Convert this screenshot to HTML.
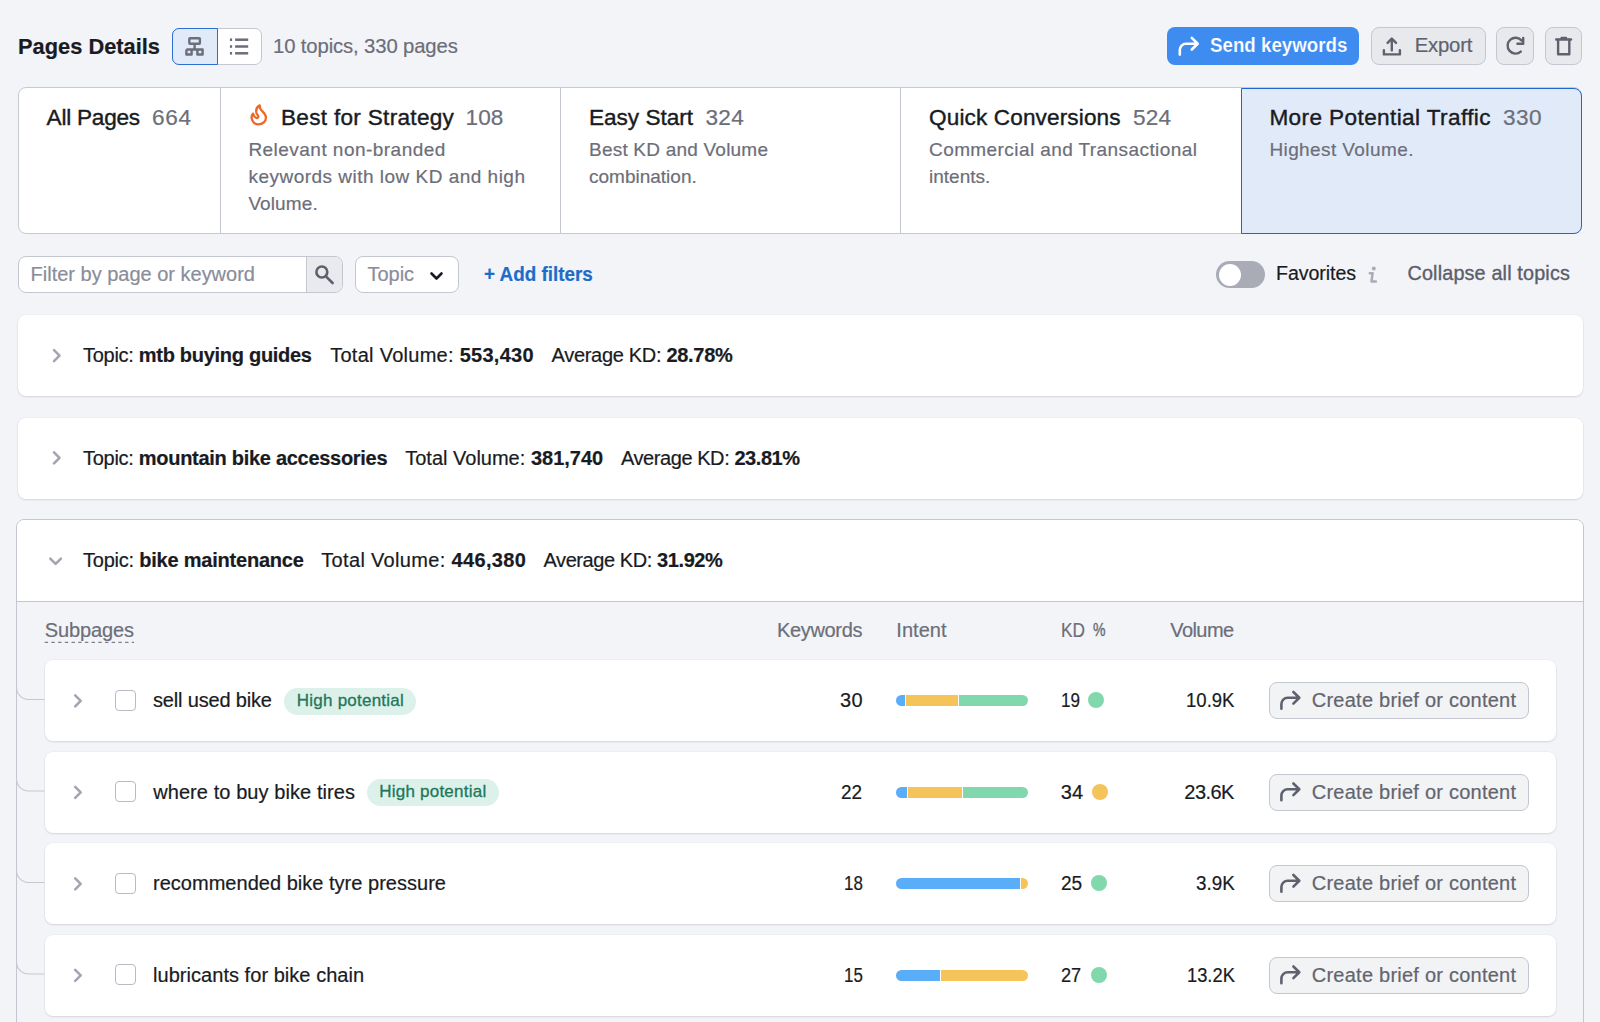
<!DOCTYPE html>
<html><head><meta charset="utf-8">
<style>
*{box-sizing:border-box;margin:0;padding:0}
html,body{width:1600px;height:1022px;overflow:hidden;background:#f3f4f8;font-family:"Liberation Sans",sans-serif;color:#191b23}
.a{position:absolute}
.t{position:absolute;white-space:nowrap;line-height:1;-webkit-text-stroke:0.2px currentColor}
.btn{position:absolute;border:1px solid #c4c7cf;border-radius:8px;background:rgba(130,133,145,0.1)}
.card{position:absolute;background:#fff;border-radius:8px}
svg{position:absolute;overflow:visible}
b{font-weight:bold}
</style></head><body>
<div class="a" style="left:172px;top:28px;width:90px;height:37px;border:1px solid #c4c7cf;border-radius:7px;background:#fff"></div>
<div class="a" style="left:172px;top:28px;width:46px;height:37px;border:1.5px solid #2b6fd2;border-radius:7px 0 0 7px;background:#e1eaf9"></div>
<div class="a" style="left:1166.8px;top:27.3px;width:192.5px;height:37.8px;border-radius:8px;background:#3e8cf0"></div>
<div class="btn" style="left:1370.5px;top:27.3px;width:115px;height:37.8px"></div>
<div class="btn" style="left:1496px;top:27.3px;width:38px;height:37.8px"></div>
<div class="btn" style="left:1545px;top:27.3px;width:37px;height:37.8px"></div>
<div class="t" style="left:18.10px;top:34.70px;font-size:22.8px;letter-spacing:0.000px;color:#191b23;transform:scaleX(0.9575);transform-origin:0 0;"><b>Pages Details</b></div>
<div class="t" style="left:273.00px;top:35.82px;font-size:20.3px;letter-spacing:-0.125px;color:#6c6e79;">10 topics, 330 pages</div>
<div class="t" style="left:1210.00px;top:36.39px;font-size:19.5px;letter-spacing:0.000px;color:#fff;transform:scaleX(0.9600);transform-origin:0 0;-webkit-text-stroke:0.2px #3e8cf0;"><b>Send keywords</b></div>
<div class="t" style="left:1414.70px;top:35.02px;font-size:20.3px;letter-spacing:-0.193px;color:#5f626e;">Export</div>
<div class="a" style="left:18px;top:87.2px;width:1564px;height:146.5px;border:1px solid #c6c9d0;border-radius:8px;background:#fff"></div>
<div class="a" style="left:220px;top:88px;width:1px;height:145px;background:#c4c7cf"></div>
<div class="a" style="left:560px;top:88px;width:1px;height:145px;background:#c4c7cf"></div>
<div class="a" style="left:900px;top:88px;width:1px;height:145px;background:#c4c7cf"></div>
<div class="a" style="left:1241px;top:87.5px;width:341px;height:146px;border:1.5px solid #1f66d1;border-radius:0 8px 8px 0;background:#e1eaf9"></div>
<div class="t" style="left:46.60px;top:106.87px;font-size:22.6px;letter-spacing:-0.246px;color:#191b23;-webkit-text-stroke:0.4px #191b23;">All Pages</div>
<div class="t" style="left:152.00px;top:106.87px;font-size:22.6px;letter-spacing:0.629px;color:#6c6e79;">664</div>
<div class="t" style="left:281.00px;top:106.87px;font-size:22.6px;letter-spacing:0.289px;color:#191b23;-webkit-text-stroke:0.4px #191b23;">Best for Strategy</div>
<div class="t" style="left:465.60px;top:106.87px;font-size:22.6px;letter-spacing:0.000px;color:#6c6e79;">108</div>
<div class="t" style="left:589.00px;top:106.87px;font-size:22.6px;letter-spacing:-0.021px;color:#191b23;-webkit-text-stroke:0.4px #191b23;">Easy Start</div>
<div class="t" style="left:705.60px;top:106.87px;font-size:22.6px;letter-spacing:0.204px;color:#6c6e79;">324</div>
<div class="t" style="left:929.00px;top:106.87px;font-size:22.6px;letter-spacing:0.124px;color:#191b23;-webkit-text-stroke:0.4px #191b23;">Quick Conversions</div>
<div class="t" style="left:1133.00px;top:106.87px;font-size:22.6px;letter-spacing:0.129px;color:#6c6e79;">524</div>
<div class="t" style="left:1269.40px;top:106.87px;font-size:22.6px;letter-spacing:0.385px;color:#191b23;-webkit-text-stroke:0.4px #191b23;">More Potential Traffic</div>
<div class="t" style="left:1503.00px;top:106.87px;font-size:22.6px;letter-spacing:0.429px;color:#6c6e79;">330</div>
<div class="t" style="left:248.40px;top:139.92px;font-size:19px;letter-spacing:0.468px;color:#6c6e79;">Relevant non-branded</div>
<div class="t" style="left:248.40px;top:166.92px;font-size:19px;letter-spacing:0.487px;color:#6c6e79;">keywords with low KD and high</div>
<div class="t" style="left:248.40px;top:193.92px;font-size:19px;letter-spacing:0.102px;color:#6c6e79;">Volume.</div>
<div class="t" style="left:589.00px;top:139.92px;font-size:19px;letter-spacing:0.214px;color:#6c6e79;">Best KD and Volume</div>
<div class="t" style="left:589.00px;top:166.92px;font-size:19px;letter-spacing:0.000px;color:#6c6e79;">combination.</div>
<div class="t" style="left:929.00px;top:139.92px;font-size:19px;letter-spacing:0.419px;color:#6c6e79;">Commercial and Transactional</div>
<div class="t" style="left:929.00px;top:166.92px;font-size:19px;letter-spacing:0.000px;color:#6c6e79;">intents.</div>
<div class="t" style="left:1269.40px;top:139.52px;font-size:19px;letter-spacing:0.406px;color:#6c6e79;">Highest Volume.</div>
<div class="a" style="left:18px;top:256px;width:325px;height:37px;border:1px solid #c4c7cf;border-radius:8px;background:#fff;overflow:hidden">
  <div class="a" style="left:287.4px;top:0;width:38px;height:37px;background:#e9eaee;border-left:1px solid #c4c7cf"></div></div>
<div class="a" style="left:354.5px;top:256px;width:104px;height:37px;border:1px solid #c4c7cf;border-radius:8px;background:#fff"></div>
<div class="a" style="left:1216px;top:261px;width:49px;height:27px;border-radius:14px;background:#a9abb6"></div>
<div class="a" style="left:1218.5px;top:263.5px;width:22px;height:22px;border-radius:11px;background:#fff"></div>
<div class="t" style="left:30.60px;top:264.47px;font-size:20px;letter-spacing:-0.008px;color:#898d9a;">Filter by page or keyword</div>
<div class="t" style="left:367.60px;top:264.47px;font-size:20px;letter-spacing:-0.050px;color:#898d9a;">Topic</div>
<div class="t" style="left:483.60px;top:264.89px;font-size:19.5px;letter-spacing:0.000px;color:#1d6cc8;transform:scaleX(0.9670);transform-origin:0 0;"><b>+ Add filters</b></div>
<div class="t" style="left:1276.00px;top:263.81px;font-size:19.6px;letter-spacing:-0.070px;color:#191b23;">Favorites</div>
<div class="t" style="left:1407.50px;top:263.84px;font-size:19.8px;letter-spacing:0.162px;color:#5b5e6a;-webkit-text-stroke:0.35px #5b5e6a;">Collapse all topics</div>
<div class="card" style="left:17.5px;top:315px;width:1565px;height:81px;box-shadow:0 1px 2px rgba(25,27,35,.12),0 0 0 0.5px rgba(25,27,35,.04)"></div>
<div class="card" style="left:17.5px;top:417.5px;width:1565px;height:81px;box-shadow:0 1px 2px rgba(25,27,35,.12),0 0 0 0.5px rgba(25,27,35,.04)"></div>
<div class="t" style="left:83.00px;top:345.47px;font-size:20px;letter-spacing:-0.287px;color:#191b23;">Topic: <b>mtb buying guides</b></div>
<div class="t" style="left:330.20px;top:345.47px;font-size:20px;letter-spacing:0.274px;color:#191b23;">Total Volume: <b>553,430</b></div>
<div class="t" style="left:551.60px;top:345.47px;font-size:20px;letter-spacing:-0.310px;color:#191b23;">Average KD: <b>28.78%</b></div>
<div class="t" style="left:83.00px;top:447.57px;font-size:20px;letter-spacing:-0.287px;color:#191b23;">Topic: <b>mountain bike accessories</b></div>
<div class="t" style="left:405.20px;top:447.57px;font-size:20px;letter-spacing:0.004px;color:#191b23;">Total Volume: <b>381,740</b></div>
<div class="t" style="left:621.00px;top:447.57px;font-size:20px;letter-spacing:-0.434px;color:#191b23;">Average KD: <b>23.81%</b></div>
<div class="a" style="left:16px;top:519px;width:1567.5px;height:520px;border:1px solid #c4c7cf;border-radius:8px;background:#f3f4f8;overflow:hidden">
  <div class="a" style="left:0;top:0;width:1566px;height:82px;background:#fff;border-bottom:1px solid #c4c7cf"></div></div>
<svg style="left:0;top:0" width="200" height="700"><path d="M44.7 642.3H134" stroke="#7d808b" stroke-width="1.3" stroke-dasharray="3.4 3.3"/></svg>
<div class="t" style="left:83.00px;top:550.07px;font-size:20px;letter-spacing:-0.220px;color:#191b23;">Topic: <b>bike maintenance</b></div>
<div class="t" style="left:321.25px;top:550.07px;font-size:20px;letter-spacing:0.332px;color:#191b23;">Total Volume: <b>446,380</b></div>
<div class="t" style="left:543.50px;top:550.07px;font-size:20px;letter-spacing:-0.416px;color:#191b23;">Average KD: <b>31.92%</b></div>
<div class="t" style="left:44.70px;top:620.27px;font-size:20px;letter-spacing:-0.100px;color:#6c6e79;">Subpages</div>
<div class="t" style="left:776.90px;top:620.07px;font-size:20px;letter-spacing:-0.314px;color:#6c6e79;">Keywords</div>
<div class="t" style="left:896.30px;top:620.07px;font-size:20px;letter-spacing:0.040px;color:#6c6e79;">Intent</div>
<div class="t" style="left:1061.00px;top:620.07px;font-size:20px;letter-spacing:0.000px;color:#6c6e79;transform:scaleX(0.8633);transform-origin:0 0;">KD</div>
<div class="t" style="left:1092.50px;top:621.34px;font-size:18.5px;letter-spacing:0.000px;color:#6c6e79;transform:scaleX(0.7592);transform-origin:0 0;-webkit-text-stroke:0.45px #6c6e79;">%</div>
<div class="t" style="left:1170.20px;top:620.07px;font-size:20px;letter-spacing:-0.540px;color:#6c6e79;">Volume</div>
<div class="card" style="left:44.5px;top:660px;width:1511px;height:81px;box-shadow:0 1px 2px rgba(25,27,35,.12),0 0 0 0.5px rgba(25,27,35,.04)"></div>
<div class="a" style="left:114.5px;top:689.5px;width:21px;height:21px;border:1px solid #b8bbc4;border-radius:4px;background:#fff"></div>
<div class="a" style="left:284.3px;top:687.5px;width:132px;height:27px;border-radius:14px;background:#dcf1ea"></div>
<div class="a" style="left:1088.2px;top:692.2px;width:16.2px;height:16.2px;border-radius:50%;background:#80d8ac"></div>
<div class="btn" style="left:1268.5px;top:682.0px;width:260px;height:37px"></div>
<div class="a" style="left:895.75px;top:695.0px;width:132px;height:11px;border-radius:5.5px;overflow:hidden;display:flex;background:#fff"><div style="width:9px;height:11px;background:#5aadf8;flex:none;margin-left:0px"></div><div style="width:52.5px;height:11px;background:#f4c35a;flex:none;margin-left:1px"></div><div style="width:69.5px;height:11px;background:#80d8ac;flex:none;margin-left:1px"></div></div>
<div class="t" style="left:153.00px;top:690.47px;font-size:20px;letter-spacing:-0.169px;color:#191b23;">sell used bike</div>
<div class="t" style="left:296.80px;top:691.61px;font-size:17px;letter-spacing:0.233px;color:#21775a;-webkit-text-stroke:0.3px #21775a;">High potential</div>
<div class="t" style="left:840.00px;top:690.47px;font-size:20px;letter-spacing:0.300px;color:#191b23;">30</div>
<div class="t" style="left:1060.80px;top:690.47px;font-size:20px;letter-spacing:0.000px;color:#191b23;transform:scaleX(0.8559);transform-origin:0 0;">19</div>
<div class="t" style="left:1186.00px;top:690.47px;font-size:20px;letter-spacing:0.000px;color:#191b23;transform:scaleX(0.9272);transform-origin:0 0;">10.9K</div>
<div class="t" style="left:1311.80px;top:690.47px;font-size:20px;letter-spacing:0.236px;color:#62656f;">Create brief or content</div>
<div class="card" style="left:44.5px;top:751.5px;width:1511px;height:81px;box-shadow:0 1px 2px rgba(25,27,35,.12),0 0 0 0.5px rgba(25,27,35,.04)"></div>
<div class="a" style="left:114.5px;top:781.0px;width:21px;height:21px;border:1px solid #b8bbc4;border-radius:4px;background:#fff"></div>
<div class="a" style="left:366.7px;top:779.0px;width:132px;height:27px;border-radius:14px;background:#dcf1ea"></div>
<div class="a" style="left:1092.3px;top:783.7px;width:16.2px;height:16.2px;border-radius:50%;background:#f4c35a"></div>
<div class="btn" style="left:1268.5px;top:773.5px;width:260px;height:37px"></div>
<div class="a" style="left:895.75px;top:786.5px;width:132px;height:11px;border-radius:5.5px;overflow:hidden;display:flex;background:#fff"><div style="width:11px;height:11px;background:#5aadf8;flex:none;margin-left:0px"></div><div style="width:54px;height:11px;background:#f4c35a;flex:none;margin-left:1px"></div><div style="width:65px;height:11px;background:#80d8ac;flex:none;margin-left:1px"></div></div>
<div class="t" style="left:153.20px;top:781.97px;font-size:20px;letter-spacing:0.077px;color:#191b23;">where to buy bike tires</div>
<div class="t" style="left:379.20px;top:783.11px;font-size:17px;letter-spacing:0.233px;color:#21775a;-webkit-text-stroke:0.3px #21775a;">High potential</div>
<div class="t" style="left:841.40px;top:781.97px;font-size:20px;letter-spacing:0.000px;color:#191b23;transform:scaleX(0.9459);transform-origin:0 0;">22</div>
<div class="t" style="left:1060.80px;top:781.97px;font-size:20px;letter-spacing:0.000px;color:#191b23;">34</div>
<div class="t" style="left:1184.30px;top:781.97px;font-size:20px;letter-spacing:-0.525px;color:#191b23;">23.6K</div>
<div class="t" style="left:1311.80px;top:781.97px;font-size:20px;letter-spacing:0.236px;color:#62656f;">Create brief or content</div>
<div class="card" style="left:44.5px;top:843px;width:1511px;height:81px;box-shadow:0 1px 2px rgba(25,27,35,.12),0 0 0 0.5px rgba(25,27,35,.04)"></div>
<div class="a" style="left:114.5px;top:872.5px;width:21px;height:21px;border:1px solid #b8bbc4;border-radius:4px;background:#fff"></div>
<div class="a" style="left:1091px;top:875.2px;width:16.2px;height:16.2px;border-radius:50%;background:#80d8ac"></div>
<div class="btn" style="left:1268.5px;top:865.0px;width:260px;height:37px"></div>
<div class="a" style="left:895.75px;top:878.0px;width:132px;height:11px;border-radius:5.5px;overflow:hidden;display:flex;background:#fff"><div style="width:124.5px;height:11px;background:#5aadf8;flex:none;margin-left:0px"></div><div style="width:6.5px;height:11px;background:#f4c35a;flex:none;margin-left:1px"></div></div>
<div class="t" style="left:153.00px;top:873.47px;font-size:20px;letter-spacing:0.021px;color:#191b23;">recommended bike tyre pressure</div>
<div class="t" style="left:843.60px;top:873.47px;font-size:20px;letter-spacing:0.000px;color:#191b23;transform:scaleX(0.8468);transform-origin:0 0;">18</div>
<div class="t" style="left:1060.80px;top:873.47px;font-size:20px;letter-spacing:0.000px;color:#191b23;transform:scaleX(0.9550);transform-origin:0 0;">25</div>
<div class="t" style="left:1195.60px;top:873.47px;font-size:20px;letter-spacing:0.000px;color:#191b23;transform:scaleX(0.9417);transform-origin:0 0;">3.9K</div>
<div class="t" style="left:1311.80px;top:873.47px;font-size:20px;letter-spacing:0.236px;color:#62656f;">Create brief or content</div>
<div class="card" style="left:44.5px;top:934.5px;width:1511px;height:81px;box-shadow:0 1px 2px rgba(25,27,35,.12),0 0 0 0.5px rgba(25,27,35,.04)"></div>
<div class="a" style="left:114.5px;top:964.0px;width:21px;height:21px;border:1px solid #b8bbc4;border-radius:4px;background:#fff"></div>
<div class="a" style="left:1090.5px;top:966.7px;width:16.2px;height:16.2px;border-radius:50%;background:#80d8ac"></div>
<div class="btn" style="left:1268.5px;top:956.5px;width:260px;height:37px"></div>
<div class="a" style="left:895.75px;top:969.5px;width:132px;height:11px;border-radius:5.5px;overflow:hidden;display:flex;background:#fff"><div style="width:44px;height:11px;background:#5aadf8;flex:none;margin-left:0px"></div><div style="width:87px;height:11px;background:#f4c35a;flex:none;margin-left:1px"></div></div>
<div class="t" style="left:153.00px;top:964.97px;font-size:20px;letter-spacing:0.042px;color:#191b23;">lubricants for bike chain</div>
<div class="t" style="left:843.60px;top:964.97px;font-size:20px;letter-spacing:0.000px;color:#191b23;transform:scaleX(0.8468);transform-origin:0 0;">15</div>
<div class="t" style="left:1060.80px;top:964.97px;font-size:20px;letter-spacing:0.000px;color:#191b23;transform:scaleX(0.9099);transform-origin:0 0;">27</div>
<div class="t" style="left:1186.60px;top:964.97px;font-size:20px;letter-spacing:0.000px;color:#191b23;transform:scaleX(0.9157);transform-origin:0 0;">13.2K</div>
<div class="t" style="left:1311.80px;top:964.97px;font-size:20px;letter-spacing:0.236px;color:#62656f;">Create brief or content</div>
<svg style="left:0;top:0" width="1600" height="1022" viewBox="0 0 1600 1022"><g fill="none" stroke="#6c6e79" stroke-width="2.4" stroke-linejoin="round"><rect x="189.3" y="38.2" width="10.6" height="5.6" rx="0.8"/><path d="M194.6 43.8V49.4"/><path d="M186.4 49.5H202.6V54.5H197.4V49.5M191.6 49.5V54.5H186.4V49.5"/></g><g fill="#6c6e79"><rect x="229.9" y="38.400000000000006" width="2.2" height="2.6"/><rect x="235.1" y="38.45" width="13.1" height="2.5"/><rect x="229.9" y="45.2" width="2.2" height="2.6"/><rect x="235.1" y="45.25" width="13.1" height="2.5"/><rect x="229.9" y="52.0" width="2.2" height="2.6"/><rect x="235.1" y="52.05" width="13.1" height="2.5"/></g><path d="M1179.8 54.6V50.0A6.3 6.3 0 0 1 1186.1 43.7H1197.3999999999999M1191.8 37.900000000000006L1197.7 43.7L1191.8 49.5" fill="none" stroke="#fff" stroke-width="2.6" stroke-linecap="round" stroke-linejoin="round"/><g fill="none" stroke="#5f626e" stroke-width="2.4" stroke-linecap="round" stroke-linejoin="round"><path d="M1383.9 50.2V54.4H1399.9V50.2"/><path d="M1391.8 50.4V38.6M1387.6 42.9L1391.8 38.5L1396 42.9"/></g><g fill="none" stroke="#5f626e" stroke-width="2.4" stroke-linecap="round" stroke-linejoin="round"><path d="M1520.8 51.6A7.9 7.9 0 1 1 1521.6 40.6"/><path d="M1523.2 38V43.8H1517.4"/></g><g fill="none" stroke="#5f626e" stroke-width="2.4" stroke-linecap="round" stroke-linejoin="round"><path d="M1556.2 39.5H1571"/><path d="M1561.6 38H1566"/><path d="M1558.1 39.6V54.2H1569.3V39.6"/></g><path transform="translate(244 100)" d="M15.7 5.3C13.2 6.8 11.7 9.8 12.4 12.8C12.9 14.6 14.8 15.6 14.2 17.2C13.6 18.6 10.5 18.6 9.1 13.6C7.6 15.2 7.3 18.2 8.4 20.5C9.6 23 11.8 24.4 14.2 24.4C18.8 24.4 22 21.2 22 17.6C22 14.2 19.5 12.4 17.6 10.5C16.2 9.1 15.7 7.5 15.7 5.3Z" fill="none" stroke="#ef682b" stroke-width="2.3" stroke-linejoin="round"/><g fill="none" stroke="#5e616d" stroke-width="2.6" stroke-linecap="round"><circle cx="321.85" cy="272" r="5.45"/><path d="M326.4 276.8L332.6 283"/></g><path d="M431.5 273.5L436.5 278.5L441.5 273.5" fill="none" stroke="#191b23" stroke-width="2.6" stroke-linecap="round" stroke-linejoin="round"/><g fill="none" stroke="#a9abb6" stroke-width="2.5" stroke-linecap="round" stroke-linejoin="round"><path d="M1369.8 273.3H1372.6L1371.5 281.4H1375.9"/></g><circle cx="1373.8" cy="268.6" r="2" fill="#a9abb6"/><path d="M54 350.2L59.5 355.7L54 361.2" fill="none" stroke="#a3a6b1" stroke-width="2.6" stroke-linecap="round" stroke-linejoin="round"/><path d="M54 452.3L59.5 457.8L54 463.3" fill="none" stroke="#a3a6b1" stroke-width="2.6" stroke-linecap="round" stroke-linejoin="round"/><path d="M50.3 558.6L55.6 563.9L60.9 558.6" fill="none" stroke="#a3a6b1" stroke-width="2.6" stroke-linecap="round" stroke-linejoin="round"/><path d="M75.2 695.4L80.7 700.9L75.2 706.4" fill="none" stroke="#a3a6b1" stroke-width="2.6" stroke-linecap="round" stroke-linejoin="round"/><path d="M1281.4 708.7V704.1A6.3 6.3 0 0 1 1287.7 697.8000000000001H1299.0M1293.4 692.0L1299.3000000000002 697.8000000000001L1293.4 703.6" fill="none" stroke="#5f626e" stroke-width="2.6" stroke-linecap="round" stroke-linejoin="round"/><path d="M16.5 687.5A12 12 0 0 0 28.5 699.5H44.5" fill="none" stroke="#c4c7cf" stroke-width="1.1"/><path d="M75.2 786.9L80.7 792.4L75.2 797.9" fill="none" stroke="#a3a6b1" stroke-width="2.6" stroke-linecap="round" stroke-linejoin="round"/><path d="M1281.4 800.2V795.6A6.3 6.3 0 0 1 1287.7 789.3000000000001H1299.0M1293.4 783.5L1299.3000000000002 789.3000000000001L1293.4 795.1" fill="none" stroke="#5f626e" stroke-width="2.6" stroke-linecap="round" stroke-linejoin="round"/><path d="M16.5 779.0A12 12 0 0 0 28.5 791.0H44.5" fill="none" stroke="#c4c7cf" stroke-width="1.1"/><path d="M75.2 878.4L80.7 883.9L75.2 889.4" fill="none" stroke="#a3a6b1" stroke-width="2.6" stroke-linecap="round" stroke-linejoin="round"/><path d="M1281.4 891.7V887.1A6.3 6.3 0 0 1 1287.7 880.8000000000001H1299.0M1293.4 875.0L1299.3000000000002 880.8000000000001L1293.4 886.6" fill="none" stroke="#5f626e" stroke-width="2.6" stroke-linecap="round" stroke-linejoin="round"/><path d="M16.5 870.5A12 12 0 0 0 28.5 882.5H44.5" fill="none" stroke="#c4c7cf" stroke-width="1.1"/><path d="M75.2 969.9L80.7 975.4L75.2 980.9" fill="none" stroke="#a3a6b1" stroke-width="2.6" stroke-linecap="round" stroke-linejoin="round"/><path d="M1281.4 983.2V978.6A6.3 6.3 0 0 1 1287.7 972.3000000000001H1299.0M1293.4 966.5L1299.3000000000002 972.3000000000001L1293.4 978.1" fill="none" stroke="#5f626e" stroke-width="2.6" stroke-linecap="round" stroke-linejoin="round"/><path d="M16.5 962.0A12 12 0 0 0 28.5 974.0H44.5" fill="none" stroke="#c4c7cf" stroke-width="1.1"/></svg>
</body></html>
